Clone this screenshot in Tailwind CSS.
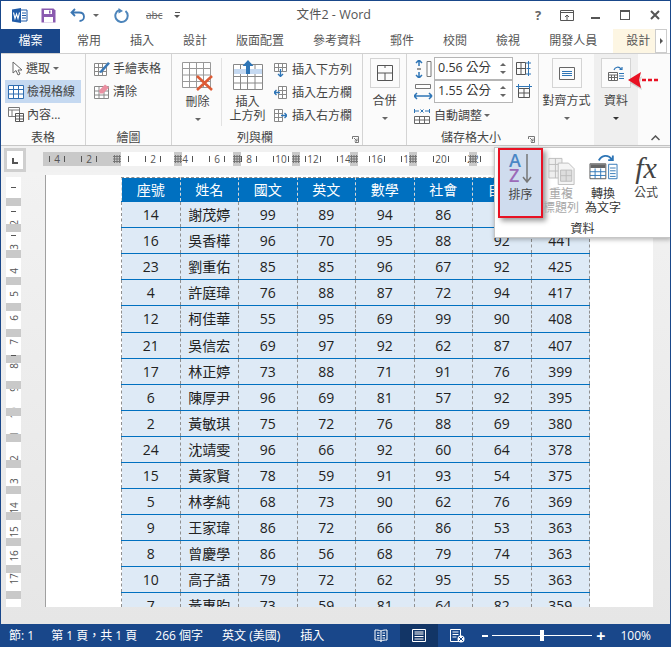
<!DOCTYPE html>
<html lang="zh-Hant">
<head>
    <meta charset="UTF-8">
    <title>文件2 - Word</title>
    <script src="https://cdn.jsdelivr.net/npm/@tailwindcss/browser@4"></script>
</head>
<body class="m-0 overflow-hidden bg-white">
<div class="relative flex h-[647px] w-[671px] flex-col overflow-hidden border-x border-t border-[#19478a] bg-white font-['Open_Sans','Noto_Sans_CJK_TC',sans-serif] text-[12px] leading-none text-[#444]">

    <!-- title bar -->
    <div class="flex h-[28px] shrink-0 items-center">
        <svg class="ml-[10px]" width="17" height="17" viewBox="0 0 17 17"><path d="M1 2.500 10 1v15l-9-1.500z" fill="#1f5ba8"/><path d="M10 3h6v11h-6" fill="#fff" stroke="#1f5ba8"/><path d="M11 6h4M11 8.500h4M11 11h4" stroke="#1f5ba8"/><path d="M2.500 5.500 4 11.500 5.500 7l1.500 4.500L8.500 5.500" fill="none" stroke="#fff" stroke-width="1.100"/></svg>
        <svg class="ml-[13px]" width="15" height="15" viewBox="0 0 15 15"><path d="M.5.500h12l2 2v12H.5z" fill="#8a5aaf"/><rect x="3" y="2" width="8" height="4" fill="#fff"/><rect x="3" y="9" width="9" height="5.500" fill="#fff"/><rect x="8" y="2.500" width="1.500" height="3" fill="#8a5aaf"/></svg>
        <svg class="ml-[14px]" width="16" height="14" viewBox="0 0 16 14"><path d="M5 1 1.500 4.500 5 8M2 4.500h7c3 0 5 1.800 5 4.300S12 13 9.500 13" fill="none" stroke="#3c77b3" stroke-width="1.800"/></svg>
        <span class="ml-[7px] h-0 w-0 border-x-[3px] border-t-[3px] border-x-transparent border-t-[#666]"></span>
        <svg class="ml-[15px]" width="16" height="15" viewBox="0 0 16 15"><path d="M5 2.100A6.200 6.200 0 1 0 11.500 3" fill="none" stroke="#4d85bb" stroke-width="2"/><path d="M5.500 0v5.500L10 3z" fill="#4d85bb" transform="translate(-1 0)"/></svg>
        <span class="ml-[16px] text-[10px] text-[#666] line-through">abc</span>
        <span class="ml-[12px] flex flex-col items-center gap-[2px]"><span class="h-px w-[5px] bg-[#555]"></span><span class="h-0 w-0 border-x-[3px] border-t-[3px] border-x-transparent border-t-[#555]"></span></span>
        <span class="ml-[116px] text-[12.500px] text-[#555]">文件2 - Word</span>
        <span class="ml-auto flex items-center">
            <span class="w-[14px] text-center text-[13px] font-bold text-[#666]">?</span>
            <svg class="ml-[15px]" width="14" height="11" viewBox="0 0 14 11"><path d="M.5.500h13v10H.5zM.5 2.500h13M5 7l2-2 2 2M7 5v5" fill="none" stroke="#555"/></svg>
            <span class="ml-[17px] h-[2px] w-[9px] translate-y-[3px] bg-[#555]"></span>
            <span class="ml-[20px] h-[10px] w-[10px] border border-t-2 border-[#555]"></span>
            <svg class="ml-[20px] mr-[10px]" width="10" height="10" viewBox="0 0 10 10"><path d="M1 1l8 8M9 1l-8 8" stroke="#555" stroke-width="2"/></svg>
        </span>
    </div>

    <!-- tabs -->
    <div class="flex h-[25px] shrink-0 items-stretch border-b border-[#d0d0d0] text-[#555]">
        <span class="flex w-[59px] items-center justify-center bg-[#19478a] text-white">檔案</span>
        <span class="flex items-center gap-[29px] pl-[17px]">
            <span>常用</span><span>插入</span><span>設計</span><span>版面配置</span><span>參考資料</span><span>郵件</span><span>校閱</span><span>檢視</span><span>開發人員</span>
        </span>
        <span class="ml-[16px] flex w-[42px] items-center justify-center bg-[#fdf6e3] pl-[8px]">設計</span>
        <span class="flex w-[12px] items-center justify-center border border-[#ccc] bg-white"><span class="h-0 w-0 border-y-[3px] border-l-[3px] border-y-transparent border-l-[#555]"></span></span>
    </div>

    <!-- ribbon -->
    <div class="flex h-[92px] shrink-0 border-b border-[#c6c6c6] bg-[#fbfbfb]">

        <div class="flex w-[85px] flex-col border-r border-[#d4d4d4]">
            <div class="flex flex-1 flex-col px-[4px] pt-[3px]">
                <div class="flex h-[23px] items-center gap-[3px] pl-[7px]">
                    <svg width="11" height="15" viewBox="0 0 11 15"><path d="M1 1v11l3-2.500L6 14l2-1-2-4h4z" fill="#fff" stroke="#666"/></svg>
                    <span>選取</span><span class="h-0 w-0 border-x-[3px] border-t-[3px] border-x-transparent border-t-[#666]"></span>
                </div>
                <div class="flex h-[23px] items-center gap-[3px] bg-[#c5d9f1] pl-[3px]">
                    <svg width="16" height="14" viewBox="0 0 16 14"><path d="M.5.500h15v13H.5zM.5 4.500h15M.5 9h15M5.500 1v12M10.500 1v12" fill="#fff" stroke="#2f6db0"/></svg>
                    <span>檢視格線</span>
                </div>
                <div class="flex h-[23px] items-center gap-[3px] pl-[3px]">
                    <svg width="16" height="15" viewBox="0 0 16 15"><path d="M.5.500h11v9H.5zM.5 3h11M4 3v6" fill="#fff" stroke="#777"/><path d="M7.500 6.500h8v8h-8zM7.500 9h8M7.500 12h8M11.500 6.500v8" fill="#fff" stroke="#555"/></svg>
                    <span>內容...</span>
                </div>
            </div>
            <div class="pb-[1px] text-center">表格</div>
        </div>

        <div class="flex w-[86px] flex-col border-r border-[#d4d4d4]">
            <div class="flex flex-1 flex-col pl-[8px] pt-[3px]">
                <div class="flex h-[23px] items-center gap-[3px]">
                    <svg width="16" height="15" viewBox="0 0 16 15"><path d="M.5 2.500h12v12H.5zM.5 6.500h12M.5 10.500h12M4.500 2.500v12M8.500 2.500v12" fill="#fff" stroke="#888"/><path d="M6 10 14 1l2 1.500-8 9-2.500.500z" fill="#3a78b5"/></svg>
                    <span>手繪表格</span>
                </div>
                <div class="flex h-[23px] items-center gap-[3px]">
                    <svg width="16" height="15" viewBox="0 0 16 15"><path d="M.5 2.500h14v12H.5zM.5 7h14M.5 11h14M5 2.500v12M10 2.500v12" fill="#fff" stroke="#888"/><path d="M5 6.500 11 .500l4 3-6 6H6z" fill="#ea8fa1"/></svg>
                    <span>清除</span>
                </div>
            </div>
            <div class="pb-[1px] text-center">繪圖</div>
        </div>

        <div class="relative flex w-[191px] flex-col border-r border-[#d4d4d4]">
            <div class="flex flex-1 pt-[4px]">
                <div class="mb-[6px] flex w-[50px] flex-col items-center border-r border-[#e2e2e2] pl-[2px]">
                    <svg class="mt-[4px]" width="32" height="30" viewBox="0 0 32 30"><path d="M.5.500h28v25H.5zM.5 6.500h28M.5 13h28M.5 19.500h28M7.500.500v25M14.500.500v25M21.500.500v25" fill="#fff" stroke="#999"/><path d="M15 14 30 28M30 14 15 28" stroke="#dd5b35" stroke-width="2.600"/></svg>
                    <span class="mt-[4px]">刪除</span>
                    <span class="mt-[10px] h-0 w-0 border-x-[3px] border-t-[3px] border-x-transparent border-t-[#666]"></span>
                </div>
                <div class="flex w-[51px] flex-col items-center">
                    <svg class="mt-[2px]" width="30" height="30" viewBox="0 0 30 30"><path d="M.5 4.500h29v25H.5zM.5 16.500h29M.5 23h29M7.500 4.500v25M14.500 4.500v25M22 4.500v25" fill="#fff" stroke="#888"/><rect x="1" y="9" width="28" height="5" fill="#c5d9f1"/><path d="M15 0l5.500 6H17v8h-4V6H9.500z" fill="#2e75b6"/></svg>
                    <span class="mt-[5px] text-center leading-[14px]">插入<br>上方列</span>
                </div>
                <div class="flex flex-1 flex-col pl-[1px]">
                    <div class="flex h-[23px] items-center gap-[5px]"><svg width="13" height="14" viewBox="0 0 13 14"><path d="M.5.500h12v8H.5zM.5 4.500h12M4.500.500v8M8.500.500v8" fill="#fff" stroke="#888"/><path d="M6.500 6v7M4 11l2.500 2.500L9 11" fill="none" stroke="#2e75b6" stroke-width="1.300"/></svg><span>插入下方列</span></div>
                    <div class="flex h-[23px] items-center gap-[5px]"><svg width="13" height="14" viewBox="0 0 13 14"><path d="M4.500.500h8v12h-8zM8.500.500v12M4.500 4.500h8M4.500 8.500h8" fill="#fff" stroke="#888"/><path d="M6 6.500H0M2.500 4 0 6.500 2.500 9" fill="none" stroke="#2e75b6" stroke-width="1.300"/></svg><span>插入左方欄</span></div>
                    <div class="flex h-[23px] items-center gap-[5px]"><svg width="13" height="14" viewBox="0 0 13 14"><path d="M.5.500h8v12h-8zM4.500.500v12M.5 4.500h8M.5 8.500h8" fill="#fff" stroke="#888"/><path d="M7 6.500h6M10.500 4 13 6.500 10.500 9" fill="none" stroke="#2e75b6" stroke-width="1.300"/></svg><span>插入右方欄</span></div>
                </div>
            </div>
            <div class="pb-[1px] pr-[24px] text-center">列與欄</div>
            <svg class="absolute bottom-[2px] right-[3px]" width="7" height="7" viewBox="0 0 7 7"><path d="M.5 3V.500H6.500V6.500H3M2 2l3 3M5 2.500V5H2.500" fill="none" stroke="#777"/></svg>
        </div>

        <div class="flex w-[44px] flex-col items-center border-r border-[#d4d4d4] pt-[4px]">
            <div class="flex h-[30px] w-[30px] items-center justify-center border border-[#d4d4d4]">
                <svg width="16" height="16" viewBox="0 0 16 16"><path d="M.5.500h15v15H.5zM.5 8h15M8 8v7.500M8 .500V3" fill="none" stroke="#555"/></svg>
            </div>
            <span class="mt-[7px]">合併</span>
            <span class="mt-[10px] h-0 w-0 border-x-[3px] border-t-[3px] border-x-transparent border-t-[#666]"></span>
        </div>

        <div class="relative flex w-[132px] flex-col border-r border-[#d4d4d4] pl-[7px] pt-[3px]">
            <div class="flex h-[23px] items-center">
                <svg width="19" height="18" viewBox="0 0 19 18"><path d="M13 1.500h4v15h-4z" fill="#fff" stroke="#777"/><path d="M5 0v6M5 12v6M2 3l3-3 3 3M2 15l3 3 3-3" fill="none" stroke="#2e75b6" stroke-width="1.500"/><path d="M3 8h4v2H3z" fill="#999"/></svg>
                <span class="ml-[1px] flex h-[23px] w-[79px] items-center border border-[#b5b5b5] bg-white pl-[3px] text-[12.500px] text-[#333]">0.56 公分<span class="ml-auto mr-[6px] flex flex-col gap-[5px]"><span class="h-0 w-0 border-x-[3px] border-b-[3px] border-x-transparent border-b-[#666]"></span><span class="h-0 w-0 border-x-[3px] border-t-[3px] border-x-transparent border-t-[#666]"></span></span></span>
                <svg class="ml-[3px]" width="16" height="15" viewBox="0 0 16 15"><path d="M.5 1.500h9v12h-9zM.5 7.500h9M5 1.500v12" fill="none" stroke="#555"/><path d="M12.500 0v15M10 2l5 0M10 13h5M10.500 7.500h4" fill="none" stroke="#2e75b6"/></svg>
            </div>
            <div class="flex h-[23px] items-center">
                <svg width="19" height="18" viewBox="0 0 19 18"><path d="M1.500 1.500h15v4h-15z" fill="#fff" stroke="#777"/><path d="M1 13h16M0 13l3-3M0 13l3 3M18 13l-3-3M18 13l-3 3" fill="none" stroke="#2e75b6" stroke-width="1.500"/></svg>
                <span class="ml-[1px] flex h-[23px] w-[79px] items-center border border-[#b5b5b5] bg-white pl-[3px] text-[12.500px] text-[#333]">1.55 公分<span class="ml-auto mr-[6px] flex flex-col gap-[5px]"><span class="h-0 w-0 border-x-[3px] border-b-[3px] border-x-transparent border-b-[#666]"></span><span class="h-0 w-0 border-x-[3px] border-t-[3px] border-x-transparent border-t-[#666]"></span></span></span>
                <svg class="ml-[3px]" width="16" height="15" viewBox="0 0 16 15"><path d="M2.500 4.500h11v9h-11zM2.500 9h11M8 4.500v9" fill="none" stroke="#555"/><path d="M0 2.500h16M2.500 0v5M13.500 0v5" fill="none" stroke="#2e75b6"/></svg>
            </div>
            <div class="mt-[1px] flex h-[23px] items-center">
                <svg width="17" height="16" viewBox="0 0 17 16"><path d="M.5 8.500h15v7H.5zM.5 12h15M5.500 8.500v7M10.500 8.500v7" fill="#fff" stroke="#666"/><path d="M0 3h5M11 3h5M.5 1v4M15.500 1v4M6.500 1.500l3 3M9.500 1.500l-3 3" fill="none" stroke="#2e75b6"/></svg>
                <span class="ml-[3px]">自動調整</span>
                <span class="ml-[2px] h-0 w-0 border-x-[3px] border-t-[3px] border-x-transparent border-t-[#666]"></span>
            </div>
            <div class="mt-auto pb-[1px] pr-[10px] text-center">儲存格大小</div>
            <svg class="absolute bottom-[2px] right-[3px]" width="7" height="7" viewBox="0 0 7 7"><path d="M.5 3V.500H6.500V6.500H3M2 2l3 3M5 2.500V5H2.500" fill="none" stroke="#777"/></svg>
        </div>

        <div class="flex w-[55px] flex-col items-center pt-[4px]">
            <div class="flex h-[30px] w-[30px] items-center justify-center border border-[#d4d4d4]">
                <svg width="16" height="13" viewBox="0 0 16 13"><path d="M.5.500h15v12H.5z" fill="none" stroke="#666"/><path d="M3 4.500h10M3 6.500h10M3 8.500h10" stroke="#2e75b6"/></svg>
            </div>
            <span class="mt-[7px] whitespace-nowrap">對齊方式</span>
            <span class="mt-[10px] h-0 w-0 border-x-[3px] border-t-[3px] border-x-transparent border-t-[#666]"></span>
        </div>

        <div class="flex w-[44px] flex-col items-center bg-[#efefef] pt-[4px]">
            <div class="flex h-[30px] w-[30px] items-center justify-center border border-[#d4d4d4] bg-[#fbfbfb]">
                <svg width="16" height="15" viewBox="0 0 16 15"><path d="M.5 6.500h9v8H.5zM.5 9h9M.5 11.500h9M3.500 9v5M6.500 9v5" fill="#fff" stroke="#666"/><path d="M11 7.500h5M11 10h5M11 12.500h5" stroke="#2e75b6"/><path d="M6 4C7 1 11 0 13 3M11.500 3.500h2.500V1" fill="none" stroke="#2e75b6" stroke-width="1.200"/></svg>
            </div>
            <span class="mt-[7px]">資料</span>
            <span class="mt-[10px] h-0 w-0 border-x-[3px] border-t-[3px] border-x-transparent border-t-[#333]"></span>
        </div>

        <div class="flex flex-1 items-end justify-end pb-[4px] pr-[10px]">
            <svg width="9" height="6" viewBox="0 0 9 6"><path d="M.5 5 4.500 1l4 4" fill="none" stroke="#555" stroke-width="1.500"/></svg>
        </div>
    </div>

    <!-- horizontal ruler -->
    <div class="flex h-[26px] shrink-0 bg-[#f1f1f1]">
        <div class="ml-[3px] mt-[2px] flex h-[24px] w-[22px] items-center justify-center border-[3px] border-[#cfcfcf] bg-white">
            <span class="h-[6px] w-[6px] translate-y-[1px] border-b-2 border-l-2 border-[#555]"></span>
        </div>
        <div class="relative ml-[17px] mt-[6px] flex h-[14px] w-[453px] items-center overflow-hidden bg-white text-[10px] text-[#555]">
            <span class="absolute inset-y-0 left-0 w-[77px] bg-[#c9c9c9]"></span>
            <span class="relative -ml-[2px] flex w-[32px] shrink-0 items-center justify-between px-[8px]"><i class="h-[6px] w-px bg-[#555]"></i>4<i class="h-[6px] w-px bg-[#555]"></i></span>
            <span class="relative flex w-[32px] shrink-0 items-center justify-between px-[8px]"><i class="h-[6px] w-px bg-[#555]"></i>2<i class="h-[6px] w-px bg-[#555]"></i></span>
            <span class="relative flex w-[32px] shrink-0 items-center justify-between px-[8px]"><i class="h-[6px] w-px bg-[#555]"></i><i class="h-[6px] w-px bg-[#555]"></i></span>
            <span class="relative flex w-[32px] shrink-0 items-center justify-between px-[8px]"><i class="h-[6px] w-px bg-[#555]"></i>2<i class="h-[6px] w-px bg-[#555]"></i></span>
            <span class="relative flex w-[32px] shrink-0 items-center justify-between px-[8px]"><i class="h-[6px] w-px bg-[#555]"></i>4<i class="h-[6px] w-px bg-[#555]"></i></span>
            <span class="relative flex w-[32px] shrink-0 items-center justify-between px-[8px]"><i class="h-[6px] w-px bg-[#555]"></i>6<i class="h-[6px] w-px bg-[#555]"></i></span>
            <span class="relative flex w-[32px] shrink-0 items-center justify-between px-[8px]"><i class="h-[6px] w-px bg-[#555]"></i>8<i class="h-[6px] w-px bg-[#555]"></i></span>
            <span class="relative flex w-[32px] shrink-0 items-center justify-between px-[3px]"><i class="ml-[5px] h-[6px] w-px bg-[#555]"></i>10<i class="mr-[5px] h-[6px] w-px bg-[#555]"></i></span>
            <span class="relative flex w-[32px] shrink-0 items-center justify-between px-[3px]"><i class="ml-[5px] h-[6px] w-px bg-[#555]"></i>12<i class="mr-[5px] h-[6px] w-px bg-[#555]"></i></span>
            <span class="relative flex w-[32px] shrink-0 items-center justify-between px-[3px]"><i class="ml-[5px] h-[6px] w-px bg-[#555]"></i>14<i class="mr-[5px] h-[6px] w-px bg-[#555]"></i></span>
            <span class="relative flex w-[32px] shrink-0 items-center justify-between px-[3px]"><i class="ml-[5px] h-[6px] w-px bg-[#555]"></i>16<i class="mr-[5px] h-[6px] w-px bg-[#555]"></i></span>
            <span class="relative flex w-[32px] shrink-0 items-center justify-between px-[3px]"><i class="ml-[5px] h-[6px] w-px bg-[#555]"></i>18<i class="mr-[5px] h-[6px] w-px bg-[#555]"></i></span>
            <span class="relative flex w-[32px] shrink-0 items-center justify-between px-[3px]"><i class="ml-[5px] h-[6px] w-px bg-[#555]"></i>20<i class="mr-[5px] h-[6px] w-px bg-[#555]"></i></span>
            <span class="relative flex w-[32px] shrink-0 items-center justify-between px-[3px]"><i class="ml-[5px] h-[6px] w-px bg-[#555]"></i>22<i class="mr-[5px] h-[6px] w-px bg-[#555]"></i></span>

            <!-- column markers -->
            <span class="absolute inset-y-0 left-[70px] flex w-[8px] items-center justify-center bg-[#c9c9c9]"><svg width="8" height="8" viewBox="0 0 8 8"><path d="M0 1.500h8M0 4h8M0 6.500h8M1.500 0v8M4 0v8M6.500 0v8" stroke="#777"/></svg></span>
            <span class="absolute inset-y-0 left-[131px] flex w-[8px] items-center justify-center bg-[#c9c9c9]"><svg width="8" height="8" viewBox="0 0 8 8"><path d="M0 1.500h8M0 4h8M0 6.500h8M1.500 0v8M4 0v8M6.500 0v8" stroke="#777"/></svg></span>
            <span class="absolute inset-y-0 left-[190px] flex w-[8px] items-center justify-center bg-[#c9c9c9]"><svg width="8" height="8" viewBox="0 0 8 8"><path d="M0 1.500h8M0 4h8M0 6.500h8M1.500 0v8M4 0v8M6.500 0v8" stroke="#777"/></svg></span>
            <span class="absolute inset-y-0 left-[249px] flex w-[8px] items-center justify-center bg-[#c9c9c9]"><svg width="8" height="8" viewBox="0 0 8 8"><path d="M0 1.500h8M0 4h8M0 6.500h8M1.500 0v8M4 0v8M6.500 0v8" stroke="#777"/></svg></span>
            <span class="absolute inset-y-0 left-[307px] flex w-[8px] items-center justify-center bg-[#c9c9c9]"><svg width="8" height="8" viewBox="0 0 8 8"><path d="M0 1.500h8M0 4h8M0 6.500h8M1.500 0v8M4 0v8M6.500 0v8" stroke="#777"/></svg></span>
            <span class="absolute inset-y-0 left-[366px] flex w-[8px] items-center justify-center bg-[#c9c9c9]"><svg width="8" height="8" viewBox="0 0 8 8"><path d="M0 1.500h8M0 4h8M0 6.500h8M1.500 0v8M4 0v8M6.500 0v8" stroke="#777"/></svg></span>
            <span class="absolute inset-y-0 left-[426px] flex w-[8px] items-center justify-center bg-[#c9c9c9]"><svg width="8" height="8" viewBox="0 0 8 8"><path d="M0 1.500h8M0 4h8M0 6.500h8M1.500 0v8M4 0v8M6.500 0v8" stroke="#777"/></svg></span>
        </div>
    </div>

    <!-- document area -->
    <div class="flex flex-1 bg-linear-to-b from-[#f2f2f2] to-[#e6e6e6]">
        <!-- vertical ruler, the grey bands lie over the numbers -->
        <div class="relative ml-[5px] mt-[5px] h-[430px] w-[15px] overflow-hidden bg-white text-[10px] text-[#555]">
            <div class="absolute inset-x-0 top-[34px] flex flex-col items-center">
                <span class="flex h-[23.750px] -rotate-90 items-center">2</span><span class="flex h-[23.750px] -rotate-90 items-center">3</span><span class="flex h-[23.750px] -rotate-90 items-center">4</span><span class="flex h-[23.750px] -rotate-90 items-center">5</span><span class="flex h-[23.750px] -rotate-90 items-center">6</span><span class="flex h-[23.750px] -rotate-90 items-center">7</span><span class="flex h-[23.750px] -rotate-90 items-center">8</span><span class="flex h-[23.750px] -rotate-90 items-center">9</span><span class="flex h-[23.750px] -rotate-90 items-center">10</span><span class="flex h-[23.750px] -rotate-90 items-center">11</span><span class="flex h-[23.750px] -rotate-90 items-center">12</span><span class="flex h-[23.750px] -rotate-90 items-center">13</span><span class="flex h-[23.750px] -rotate-90 items-center">14</span><span class="flex h-[23.750px] -rotate-90 items-center">15</span><span class="flex h-[23.750px] -rotate-90 items-center">16</span><span class="flex h-[23.750px] -rotate-90 items-center">17</span>
            </div>
            <div class="relative flex flex-col pt-[21px]">
                <span class="mb-[18.200px] h-[8px] shrink-0 bg-[#c9c9c9]"></span><span class="mb-[18.200px] h-[8px] shrink-0 bg-[#c9c9c9]"></span><span class="mb-[18.200px] h-[8px] shrink-0 bg-[#c9c9c9]"></span><span class="mb-[18.200px] h-[8px] shrink-0 bg-[#c9c9c9]"></span><span class="mb-[18.200px] h-[8px] shrink-0 bg-[#c9c9c9]"></span><span class="mb-[18.200px] h-[8px] shrink-0 bg-[#c9c9c9]"></span><span class="mb-[18.200px] h-[8px] shrink-0 bg-[#c9c9c9]"></span><span class="mb-[18.200px] h-[8px] shrink-0 bg-[#c9c9c9]"></span><span class="mb-[18.200px] h-[8px] shrink-0 bg-[#c9c9c9]"></span><span class="mb-[18.200px] h-[8px] shrink-0 bg-[#c9c9c9]"></span><span class="mb-[18.200px] h-[8px] shrink-0 bg-[#c9c9c9]"></span><span class="mb-[18.200px] h-[8px] shrink-0 bg-[#c9c9c9]"></span><span class="mb-[18.200px] h-[8px] shrink-0 bg-[#c9c9c9]"></span><span class="mb-[18.200px] h-[8px] shrink-0 bg-[#c9c9c9]"></span><span class="mb-[18.200px] h-[8px] shrink-0 bg-[#c9c9c9]"></span><span class="mb-[18.200px] h-[8px] shrink-0 bg-[#c9c9c9]"></span>
            </div>
            <span class="absolute left-[5px] top-[10px] h-px w-[5px] bg-[#555]"></span>
            <span class="absolute left-[5px] top-[34px] h-px w-[5px] bg-[#555]"></span>
            <span class="absolute left-[5px] top-[58px] h-px w-[5px] bg-[#555]"></span>
            <span class="absolute left-[5px] top-[178px] h-px w-[5px] bg-[#555]"></span>
        </div>

        <!-- page -->
        <div class="ml-[24px] mt-[3px] h-[432px] w-[608px] overflow-hidden border-l border-[#a0a0a0] bg-white">
            <table class="ml-[75px] mt-[2px] w-[469px] table-fixed border-collapse text-center text-[14px] text-[#222] [&_td]:h-[26px] [&_td]:border [&_td]:border-x-[#8f8f8f] [&_td]:border-y-[#0070c0] [&_td]:bg-[#deeaf6] [&_td]:p-0 [&_td]:[border-style:solid_dashed] [&_th]:h-[24px] [&_th]:border-x [&_th]:border-t [&_th]:border-dashed [&_th]:border-x-[#d8d8d8] [&_th]:border-t-[#8f8f8f] [&_th]:bg-[#0070c0] [&_th]:p-0 [&_th]:font-normal [&_th]:text-white">
                <thead>
                    <tr><th>座號</th><th>姓名</th><th>國文</th><th>英文</th><th>數學</th><th>社會</th><th>自然</th><th>總分</th></tr>
                </thead>
                <tbody>
                    <tr><td>14</td><td>謝茂婷</td><td>99</td><td>89</td><td>94</td><td>86</td><td>95</td><td>463</td></tr>
                    <tr><td>16</td><td>吳香樺</td><td>96</td><td>70</td><td>95</td><td>88</td><td>92</td><td>441</td></tr>
                    <tr><td>23</td><td>劉重佑</td><td>85</td><td>85</td><td>96</td><td>67</td><td>92</td><td>425</td></tr>
                    <tr><td>4</td><td>許庭瑋</td><td>76</td><td>88</td><td>87</td><td>72</td><td>94</td><td>417</td></tr>
                    <tr class="[&>td]:h-[27px]!"><td>12</td><td>柯佳華</td><td>55</td><td>95</td><td>69</td><td>99</td><td>90</td><td>408</td></tr>
                    <tr><td>21</td><td>吳信宏</td><td>69</td><td>97</td><td>92</td><td>62</td><td>87</td><td>407</td></tr>
                    <tr><td>17</td><td>林正婷</td><td>73</td><td>88</td><td>71</td><td>91</td><td>76</td><td>399</td></tr>
                    <tr><td>6</td><td>陳厚尹</td><td>96</td><td>69</td><td>81</td><td>57</td><td>92</td><td>395</td></tr>
                    <tr><td>2</td><td>黃敏琪</td><td>75</td><td>72</td><td>76</td><td>88</td><td>69</td><td>380</td></tr>
                    <tr><td>24</td><td>沈靖雯</td><td>96</td><td>66</td><td>92</td><td>60</td><td>64</td><td>378</td></tr>
                    <tr><td>15</td><td>黃家賢</td><td>78</td><td>59</td><td>91</td><td>93</td><td>54</td><td>375</td></tr>
                    <tr><td>5</td><td>林孝純</td><td>68</td><td>73</td><td>90</td><td>62</td><td>76</td><td>369</td></tr>
                    <tr><td>9</td><td>王家瑋</td><td>86</td><td>72</td><td>66</td><td>86</td><td>53</td><td>363</td></tr>
                    <tr><td>8</td><td>曾慶學</td><td>86</td><td>56</td><td>68</td><td>79</td><td>74</td><td>363</td></tr>
                    <tr><td>10</td><td>高子語</td><td>79</td><td>72</td><td>62</td><td>95</td><td>55</td><td>363</td></tr>
                    <tr><td>7</td><td>黃惠昀</td><td>73</td><td>59</td><td>81</td><td>64</td><td>82</td><td>359</td></tr>
                </tbody>
            </table>
        </div>
    </div>

    <!-- status bar -->
    <div class="flex h-[23px] shrink-0 items-center bg-[#19478a] text-white">
        <span class="ml-[8px]">節: 1</span>
        <span class="ml-[17px]">第 1 頁，共 1 頁</span>
        <span class="ml-[18px]">266 個字</span>
        <span class="ml-[19px]">英文 (美國)</span>
        <span class="ml-[20px]">插入</span>
        <svg class="ml-[50px]" width="14" height="14" viewBox="0 0 14 14"><path d="M7 2C5 1 3 1 1 1v10c2 0 4 0 6 1 2-1 4-1 6-1V1c-2 0-4 0-6 1zM7 2v11M3 4h2.500M3 6.500h2.500M3 9h2.500M8.500 4H11M8.500 6.500H11M8.500 9H11" fill="none" stroke="#fff"/></svg>
        <span class="ml-[12px] flex h-[23px] w-[38px] items-center justify-center bg-[#123566]">
            <svg width="14" height="13" viewBox="0 0 14 13"><path d="M.5.500h13v12H.5zM2.500 3h9M2.500 5h9M2.500 7.500h9M2.500 10h9" fill="none" stroke="#fff"/></svg>
        </span>
        <svg class="ml-[12px]" width="15" height="14" viewBox="0 0 15 14"><path d="M.5.500h10v12H.5zM2.500 3h6M2.500 5.500h6M2.500 8h4" fill="none" stroke="#fff"/><circle cx="11" cy="10" r="3.500" fill="#fff"/><path d="M9 8l4 4M13 8l-4 4" stroke="#19478a"/></svg>
        <span class="ml-[17px] h-[2px] w-[6px] bg-white"></span>
        <span class="relative ml-[4px] h-px w-[100px] bg-white"><span class="absolute left-[48px] top-[-5px] h-[11px] w-[4px] bg-white"></span></span>
        <span class="ml-[4px] text-[16px] font-bold">+</span>
        <span class="ml-[15px]">100%</span>
    </div>

    <!-- data popup -->
    <div class="absolute left-[493px] top-[146px] flex h-[91px] w-[177px] flex-col border border-[#c6c6c6] bg-white shadow-[0_2px_4px_rgba(0,0,0,0.25)]">
        <div class="flex flex-1 items-start">
            <div class="ml-[3px] flex h-[70px] w-[45px] flex-col items-center border-2 border-[#e81123] bg-[#cfdcee] shadow-[3px_3px_5px_rgba(0,0,0,0.4)]">
                <div class="mt-[3px] flex h-[30px] items-center gap-[1px]">
                    <span class="flex flex-col text-[18px] font-semibold leading-[15px]"><span class="text-[#4a86c5]">A</span><span class="text-[#9c6ab8]">Z</span></span>
                    <svg width="10" height="30" viewBox="0 0 10 30"><path d="M5 1v27M1 24l4 5 4-5" fill="none" stroke="#777" stroke-width="1.500"/></svg>
                </div>
                <span class="mt-[6px]">排序</span>
            </div>
            <div class="flex w-[36px] flex-col items-center text-[#a8a8a8]">
                <svg class="mt-[9px]" width="27" height="28" viewBox="0 0 28 30"><path d="M.5 1.500h14v21H.5zM.5 8h14M.5 15h14M7.500 1.500v21" fill="#eee" stroke="#bbb"/><path d="M10.500 6.500h11l6 6v17h-17z" fill="#f4f4f4" stroke="#bbb"/><path d="M13 14h12v12H13zM13 20h12M19 14v12" fill="#ddd" stroke="#bbb"/></svg>
                <span class="mt-[2px] whitespace-nowrap text-center leading-[14px]">重複<br>標題列</span>
            </div>
            <div class="flex w-[48px] flex-col items-center">
                <svg class="mt-[6px]" width="29" height="28" viewBox="0 0 30 30"><path d="M.5 10.500h17v16H.5z" fill="#fff" stroke="#555"/><path d="M.5 19h17M.5 23h17M6 15.500v11M12 15.500v11" stroke="#2e75b6"/><rect x="1" y="11" width="16" height="4" fill="#666"/><path d="M20.500 11h9v15.500h-9zM22 15h6M22 18h6M22 21h6M22 24h6" fill="#fff" stroke="#2e75b6"/><path d="M10 7C13 1 20 0 24 6M20 6.500h5V1.500" fill="none" stroke="#2e75b6" stroke-width="2"/></svg>
                <span class="mt-[5px] whitespace-nowrap text-center leading-[14px] text-[#333]">轉換<br>為文字</span>
            </div>
            <div class="flex w-[38px] flex-col items-center">
                <span class="mt-[6px] h-[28px] font-['Liberation_Serif',serif] text-[30px] italic leading-[28px] text-[#444]">fx</span>
                <span class="mt-[5px]">公式</span>
            </div>
        </div>
        <div class="pb-[2px] text-center text-[#333]">資料</div>
    </div>

    <!-- red arrow -->
    <svg class="absolute left-[627px] top-[71px]" width="34" height="20" viewBox="0 0 34 20"><path d="M0 8 12 1 10 8l2 7z" fill="#000" opacity=".15" transform="translate(2 3)"/><path d="M0 8 13 0 11 8l2 8z" fill="#e81123"/><path d="M14 8h4M20 8h4M26 8h4" stroke="#e81123" stroke-width="2.500"/></svg>
</div>
</body>
</html>
